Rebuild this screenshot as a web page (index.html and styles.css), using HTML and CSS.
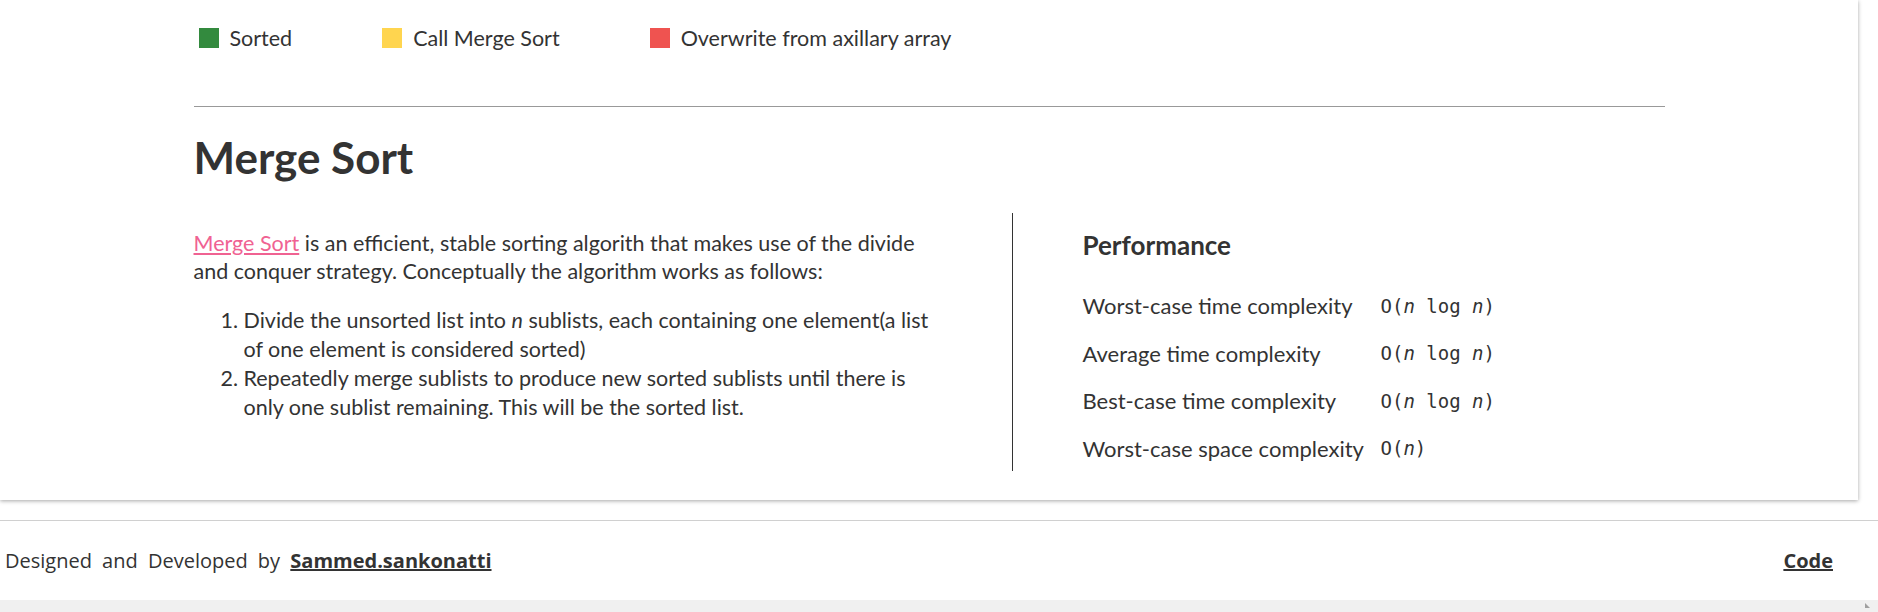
FILE: index.html
```html
<!DOCTYPE html>
<html lang="en">
<head>
<meta charset="utf-8">
<title>Merge Sort</title>
<link rel="stylesheet" href="styles.css">
</head>
<body>
<div class="frame">
  <main class="card">
    <div class="container">
      <ul class="legend">
        <li class="legend-item"><span class="swatch swatch-green"></span>Sorted</li>
        <li class="legend-item"><span class="swatch swatch-yellow"></span>Call Merge Sort</li>
        <li class="legend-item"><span class="swatch swatch-red"></span>Overwrite from axillary array</li>
      </ul>
      <hr class="rule">
      <h1 class="title">Merge Sort</h1>
      <div class="info">
        <section class="description">
          <p class="intro"><a class="wiki-link" href="#">Merge Sort</a> is an efficient, stable sorting algorith that makes use of the divide and conquer strategy. Conceptually the algorithm works as follows:</p>
          <ol class="steps">
            <li>Divide the unsorted list into <em>n</em> sublists, each containing one element(a list of one element is considered sorted)</li>
            <li>Repeatedly merge sublists to produce new sorted sublists until there is only one sublist remaining. This will be the sorted list.</li>
          </ol>
        </section>
        <section class="performance">
          <h2 class="perf-title">Performance</h2>
          <table class="perf-table">
            <tr><td class="perf-label">Worst-case time complexity</td><td class="perf-value">O(<em>n</em> log <em>n</em>)</td></tr>
            <tr><td class="perf-label">Average time complexity</td><td class="perf-value">O(<em>n</em> log <em>n</em>)</td></tr>
            <tr><td class="perf-label">Best-case time complexity</td><td class="perf-value">O(<em>n</em> log <em>n</em>)</td></tr>
            <tr><td class="perf-label">Worst-case space complexity</td><td class="perf-value">O(<em>n</em>)</td></tr>
          </table>
        </section>
      </div>
    </div>
  </main>
</div>
<footer class="footer">
  <p class="credit">Designed and Developed by <a class="footer-link" href="#">Sammed.sankonatti</a></p>
  <a class="footer-link code-link" href="#">Code</a>
</footer>
<div class="hscroll"><span class="hscroll-arrow"></span></div>
</body>
</html>
```

FILE: styles.css
```css
html, body {
  margin: 0;
  padding: 0;
  background: #ffffff;
}

body {
  width: 1878px;
  height: 612px;
  overflow: hidden;
  font-family: Lato, "Open Sans", sans-serif;
  color: #333333;
  display: flex;
  flex-direction: column;
}

.frame {
  width: 1858px;
  height: 500px;
}

.card {
  display: block;
  height: 500px;
  background: #ffffff;
  box-shadow: 0 1px 4px rgba(0, 0, 0, 0.35);
}

.container {
  width: 1471px;
  margin: 0 auto;
}

.legend {
  list-style: none;
  margin: 0;
  padding: 28px 0 0 5px;
  height: 30px;
  display: flex;
  gap: 90px;
}

.legend-item {
  display: flex;
  align-items: center;
  gap: 11px;
  font-size: 21.5px;
  line-height: 20px;
  height: 20px;
}

.swatch {
  width: 20px;
  height: 20px;
  display: inline-block;
}

.swatch-green { background: #338a3e; }
.swatch-yellow { background: #ffd54f; }
.swatch-red { background: #ef5350; }

.rule {
  margin: 48px 0 0 0;
  border: 0;
  border-top: 1px solid #999999;
  height: 0;
}

.title {
  margin: 18px 0 0 0;
  font-size: 44px;
  line-height: 64px;
  font-weight: 700;
  color: #333333;
}

.info {
  display: flex;
  margin-top: 24px;
}

.description {
  width: 819px;
  border-right: 1px solid #333333;
  height: 258px;
  box-sizing: border-box;
  padding-top: 16px;
  padding-right: 62px;
}

.intro {
  margin: 0;
  font-size: 21.5px;
  line-height: 28px;
}

.wiki-link {
  color: #f06292;
  text-decoration: underline;
}

.steps {
  margin: 21px 0 0 0;
  padding-left: 50px;
  font-size: 21.5px;
  line-height: 29px;
}

.performance {
  padding-left: 70px;
  padding-top: 16px;
}

.perf-title {
  margin: 0;
  font-size: 26px;
  line-height: 32px;
  font-weight: 700;
}

.perf-table {
  margin-top: 21px;
  border-collapse: collapse;
}

.perf-table td {
  padding: 0;
  height: 47.5px;
  vertical-align: middle;
}

.perf-label {
  font-size: 22px;
  width: 298px;
}

.perf-value {
  font-family: "DejaVu Sans Mono", "Liberation Mono", monospace;
  font-size: 19px;
}

.perf-value em {
  font-style: italic;
}

.footer {
  margin-top: 20px;
  border-top: 1px solid #d0d0d0;
  height: 80px;
  display: flex;
  align-items: center;
  justify-content: space-between;
  padding: 0 45px 0 5px;
  font-family: "Open Sans", sans-serif;
}

.credit {
  margin: 0;
  font-size: 20px;
  word-spacing: 5px;
}

.footer-link {
  color: #333333;
  font-weight: 700;
  text-decoration: underline;
  word-spacing: 0;
  font-size: 20px;
}

.hscroll {
  height: 12px;
  background: #f0f0f0;
  position: relative;
}

.hscroll-arrow {
  position: absolute;
  right: 8px;
  top: 3px;
  width: 0;
  height: 0;
  border-left: 5px solid #a0a0a0;
  border-top: 5px solid transparent;
}
```
